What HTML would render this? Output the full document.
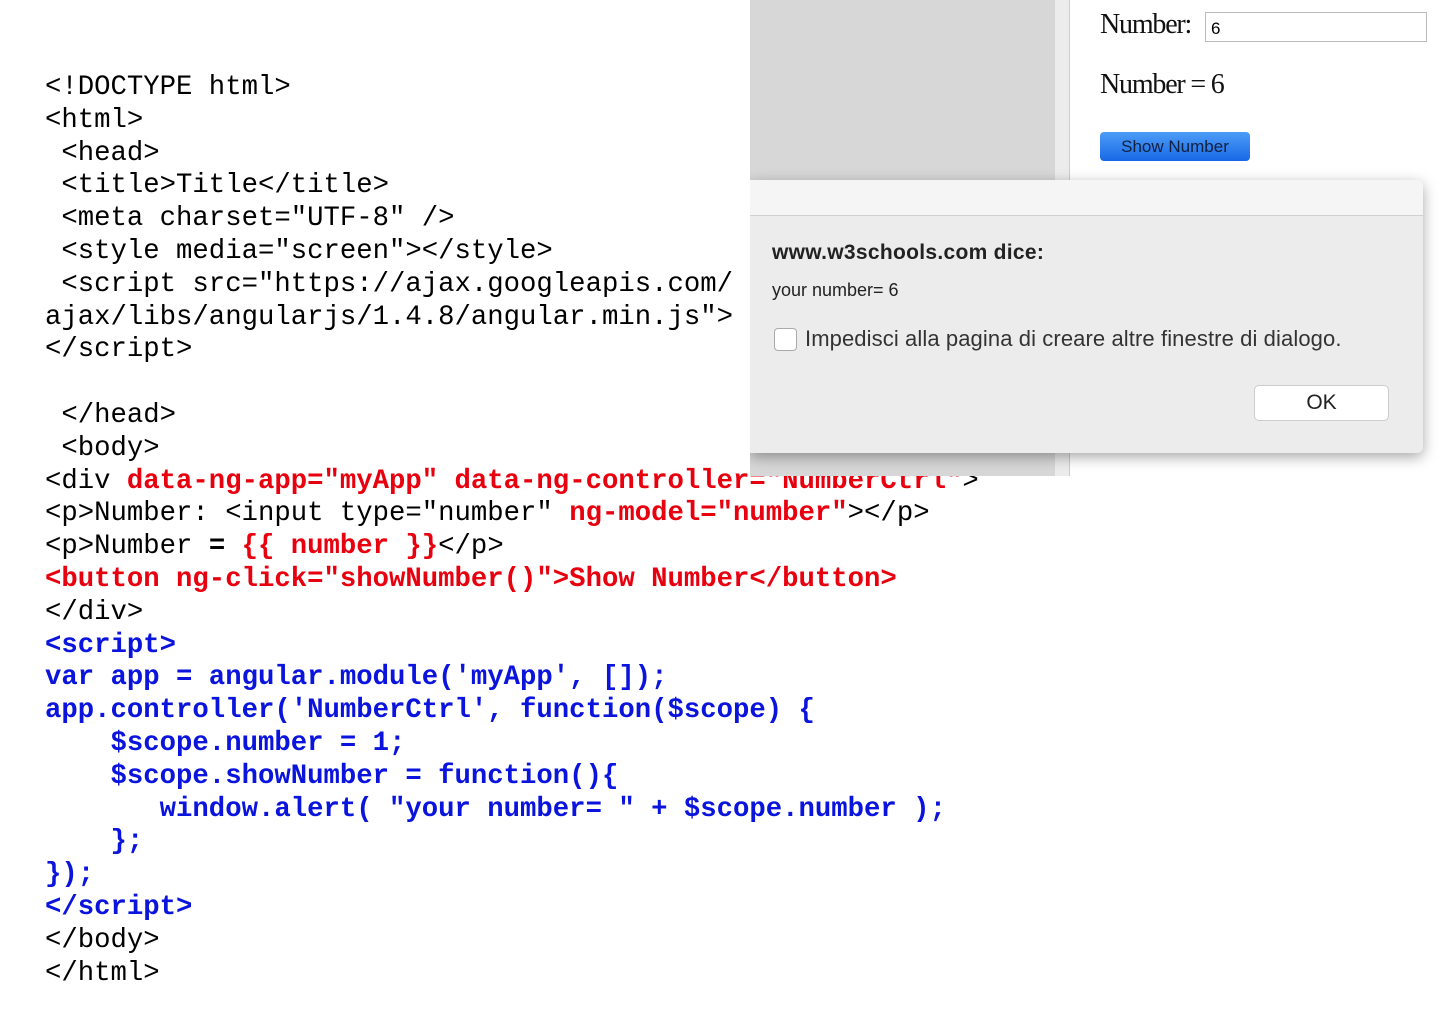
<!DOCTYPE html>
<html><head><meta charset="utf-8"><style>
html,body{margin:0;padding:0;background:#fff;width:1440px;height:1018px;overflow:hidden;position:relative}
pre{position:absolute;left:45px;top:72px;margin:0;font-family:"Liberation Mono",monospace;font-size:27.3px;line-height:32.8px;color:#000}
.r{color:#e8000f;font-weight:bold}.b{color:#0a14dc;font-weight:bold}.k{font-weight:bold}
#shot{position:absolute;left:750px;top:0;width:690px;height:476px;background:#fff;overflow:hidden}
#gray{position:absolute;left:0;top:0;width:305px;height:476px;background:#d7d7d7}
#strip{position:absolute;left:305px;top:0;width:14px;height:476px;background:#ececec;border-right:1px solid #ccc}
.serif{font-family:"Liberation Serif",serif;color:#111}
#dlg{position:absolute;left:0;top:180px;width:673px;height:273px;background:#ececec;border-radius:0 6px 6px 0;box-shadow:0 4px 14px rgba(0,0,0,.35)}
#dh{height:35px;background:#f5f5f5;border-bottom:1px solid #d0d0d0;border-radius:0 6px 0 0}
.sans{font-family:"Liberation Sans",sans-serif;color:#222}
</style></head><body>
<pre>&lt;!DOCTYPE html&gt;
&lt;html&gt;
 &lt;head&gt;
 &lt;title&gt;Title&lt;/title&gt;
 &lt;meta charset="UTF-8" /&gt;
 &lt;style media="screen"&gt;&lt;/style&gt;
 &lt;script src="https://ajax.googleapis.com/
ajax/libs/angularjs/1.4.8/angular.min.js"&gt;
&lt;/script&gt;

 &lt;/head&gt;
 &lt;body&gt;
&lt;div <span class="r">data-ng-app="myApp" data-ng-controller="NumberCtrl"</span>&gt;
&lt;p&gt;Number: &lt;input type="number" <span class="r">ng-model="number"</span>&gt;&lt;/p&gt;
&lt;p&gt;Number <span class="k">=</span> <span class="r">{{ number }}</span>&lt;/p&gt;
<span class="r">&lt;button ng-click="showNumber()"&gt;Show Number&lt;/button&gt;</span>
&lt;/div&gt;
<span class="b">&lt;script&gt;
var app = angular.module('myApp', []);
app.controller('NumberCtrl', function($scope) {
    $scope.number = 1;
    $scope.showNumber = function(){
       window.alert( "your number= " + $scope.number );
    };
});
&lt;/script&gt;</span>
&lt;/body&gt;
&lt;/html&gt;</pre>
<div id="shot">
<div id="gray"></div><div id="strip"></div>
<div class="serif" style="position:absolute;left:350px;top:9px;font-size:28px;letter-spacing:-1.2px">Number:</div>
<div style="position:absolute;left:455px;top:12px;width:222px;height:30px;border:1px solid #bbb;background:#fff;font-family:'Liberation Sans',sans-serif;font-size:17px;line-height:32px;padding-left:5px;box-sizing:border-box">6</div>
<div class="serif" style="position:absolute;left:350px;top:69px;font-size:28px;letter-spacing:-1.2px">Number = 6</div>
<div class="sans" style="position:absolute;left:350px;top:132px;width:150px;height:29px;border-radius:4px;background:linear-gradient(#4d9cf7,#1768e6);font-size:17px;line-height:29px;text-align:center;color:#102040">Show Number</div>
<div id="dlg"><div id="dh"></div>
<div class="sans" style="position:absolute;left:22px;top:61px;font-size:21px;font-weight:bold;letter-spacing:.3px">www.w3schools.com dice:</div>
<div class="sans" style="position:absolute;left:22px;top:100px;font-size:18px">your number= 6</div>
<div style="position:absolute;left:24px;top:148px;width:21px;height:21px;border:1px solid #aaa;border-radius:4px;background:#fff"></div>
<div class="sans" style="position:absolute;left:55px;top:146px;font-size:22px;color:#333;letter-spacing:.1px">Impedisci alla pagina di creare altre finestre di dialogo.</div>
<div class="sans" style="position:absolute;left:504px;top:205px;width:133px;height:34px;border:1px solid #ccc;border-radius:5px;background:#fff;font-size:21px;line-height:34px;text-align:center">OK</div>
</div>
</div>
</body></html>
